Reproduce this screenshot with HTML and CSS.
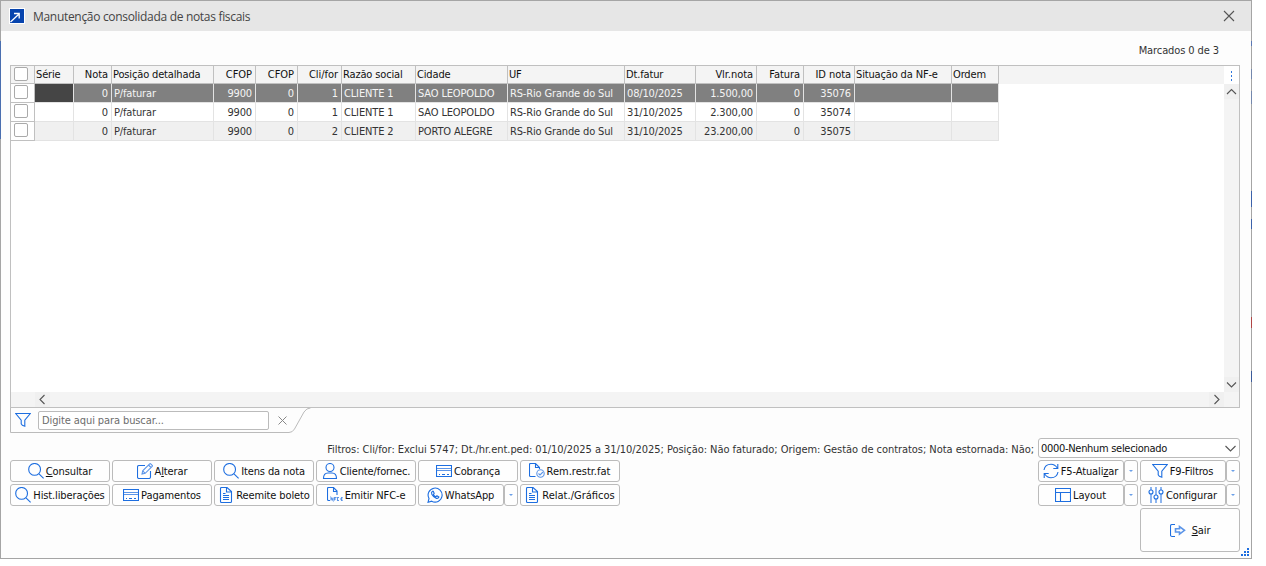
FILE: index.html
```html
<!DOCTYPE html>
<html lang="pt-BR">
<head>
<meta charset="utf-8">
<title>Manutenção consolidada de notas fiscais</title>
<link rel="stylesheet" href="styles.css">
</head>
<body>
<svg class="defs" width="0" height="0">
  <symbol id="search" viewBox="0 0 16 16"><circle cx="6.6" cy="6.4" r="5.9"/><path d="M11 10.8l4.6 4.6"/></symbol>
  <symbol id="card" viewBox="0 0 16 16"><path d="M.5 2.500h15v11H.5z"/><path class="soft" d="M1 5.500h14M1 7.500h14"/><path d="M3 11.500h1M6 11.500h3M11 11.500h2"/></symbol>
  <symbol id="doc" viewBox="0 0 16 16"><path d="M2.500 1.500q0-1 1-1h5.500l4.500 4v10q0 1-1 1h-9q-1 0-1-1zM8.500.5v4.500h5M5 6.500h2.500M5 8.500h6M5 10.500h6M5 12.500h6"/></symbol>
  <symbol id="funnel" viewBox="0 0 16 16"><path d="M.7 1.500h14.600L9.800 8.200v6l-2.400-.9-1.200-1.500V8.200z"/></symbol>
  <symbol id="edit" viewBox="0 0 16 16"><path d="M8 2.500H2q-1.500 0-1.500 1.500v10q0 1.500 1.500 1.500h10q1.500 0 1.500-1.500V8"/><path class="soft" d="M5 11l.7-3.200 7-7q.5-.5 1 0l1.500 1.500q.5.5 0 1l-7 7zM11.500 2l2.500 2.500M5.700 7.800l2.500 2.500"/></symbol>
  <symbol id="user" viewBox="0 0 16 16"><circle cx="8" cy="4.500" r="4"/><path d="M1.500 15.500Q1.500 10 6 10h4q4.500 0 4.500 5.500z"/></symbol>
  <symbol id="doccheck" viewBox="0 0 16 16"><path d="M6.500 13.500h-5q-1 0-1-1v-11q0-1 1-1h5l4 4v1.500M6.500.5v4h4"/><circle class="soft" cx="11.500" cy="10.500" r="3.700"/><path class="soft" d="M9.500 10.500l1.500 1.500 3-3"/></symbol>
  <symbol id="nfc" viewBox="0 0 16 16"><path d="M3 13.500H1.500q-1 0-1-1v-11q0-1 1-1h5l3.500 3.500v4M6.500.5v4h3.500"/><path class="soft" d="M4 13.500v-3l2 3v-3M7.500 13.500v-3h2M7.500 12h1.500M12 10.500h-1.500v3h1.500M13 12h1M15.700 13.500h-1.200v-3h1.200M14.500 12h1"/></symbol>
  <symbol id="whats" viewBox="0 0 16 16"><path d="M1 15.300l1-3.800A7 7 0 1 1 4.700 14.200z"/><path d="M5.500 4.200q-1.500 1-.7 3 1.500 3 4.700 4.200 1.800.3 2.400-1.400l-2-1.200-1 1Q7.200 9.100 6.400 7.400l.8-.9-.9-2.200z"/></symbol>
  <symbol id="refresh" viewBox="0 0 16 16"><path d="M1 7Q2 1.300 8 1.300q4 0 6.500 4M14.800 1v4.500h-4.500M15 9q-1 5.700-7 5.700-4 0-6.500-4M1.200 15v-4.500h4.500"/></symbol>
  <symbol id="layout" viewBox="0 0 16 16"><path d="M.5 1.500h15v13H.5zM.5 5.500h15M5.500 5.500v9"/></symbol>
  <symbol id="sliders" viewBox="0 0 16 16"><g class="bars"><path d="M3 0v3M3 7v9M8 0v8M8 12v4M13 0v3M13 7v9"/></g><circle cx="3" cy="5" r="2"/><circle cx="8" cy="10" r="2"/><circle cx="13" cy="5" r="2"/></symbol>
  <symbol id="exit" viewBox="0 0 16 16"><path d="M5 2.500H2q-1.500 0-1.500 1.500v9q0 1.500 1.500 1.500h3"/><path class="bold" d="M5.500 6.700h4V4.500l5 3.800-5 3.800V10h-4z"/></symbol>
</svg>
<main class="window">
  <header class="titlebar">
    <svg class="logo" width="16" height="16" viewBox="0 0 16 16"><rect width="16" height="16" fill="#fff"/><rect x="1" y="1" width="14" height="14" fill="#0744ae"/><path d="M1.500 14L9.500 6.500M5 5.500h5.200v5" fill="none" stroke="#fff" stroke-width="1.300"/></svg>
    <h1>Manutenção consolidada de notas fiscais</h1>
    <svg class="close" width="12" height="12" viewBox="0 0 12 12"><path d="M1 1l10 10M11 1L1 11"/></svg>
  </header>
  <div class="marked">Marcados 0 de 3</div>
  <section class="grid">
    <div class="view">
      <div class="row head"><b class="ck"><i></i></b><span>Série</span><span class="r">Nota</span><span>Posição detalhada</span><span class="r">CFOP</span><span class="r">CFOP</span><span class="r">Cli/for</span><span>Razão social</span><span>Cidade</span><span>UF</span><span>Dt.fatur</span><span class="r">Vlr.nota</span><span class="r">Fatura</span><span class="r">ID nota</span><span>Situação da NF-e</span><span>Ordem</span></div>
      <div class="row sel"><b class="ck"><i></i></b><span class="cur"></span><span class="r">0</span><span>P/faturar</span><span class="r">9900</span><span class="r">0</span><span class="r">1</span><span>CLIENTE 1</span><span>SAO LEOPOLDO</span><span>RS-Rio Grande do Sul</span><span>08/10/2025</span><span class="r">1.500,00</span><span class="r">0</span><span class="r">35076</span><span></span><span></span></div>
      <div class="row"><b class="ck"><i></i></b><span></span><span class="r">0</span><span>P/faturar</span><span class="r">9900</span><span class="r">0</span><span class="r">1</span><span>CLIENTE 1</span><span>SAO LEOPOLDO</span><span>RS-Rio Grande do Sul</span><span>31/10/2025</span><span class="r">2.300,00</span><span class="r">0</span><span class="r">35074</span><span></span><span></span></div>
      <div class="row alt"><b class="ck"><i></i></b><span></span><span class="r">0</span><span>P/faturar</span><span class="r">9900</span><span class="r">0</span><span class="r">2</span><span>CLIENTE 2</span><span>PORTO ALEGRE</span><span>RS-Rio Grande do Sul</span><span>31/10/2025</span><span class="r">23.200,00</span><span class="r">0</span><span class="r">35075</span><span></span><span></span></div>
    </div>
    <div class="vbar">
      <div class="menu"><svg width="15" height="17" viewBox="0 0 15 17"><path d="M7 5h1v2H7zM7 9h1v2H7zM7 13h1v2H7z"/></svg></div>
      <svg class="arrow" width="15" height="15" viewBox="0 0 15 15"><path d="M3 10l4.500-4.500L12 10"/></svg>
      <svg class="arrow" width="15" height="15" viewBox="0 0 15 15"><path d="M3 5.500L7.500 10 12 5.500"/></svg>
    </div>
    <div class="hbar">
      <svg class="arrow" width="15" height="15" viewBox="0 0 15 15"><path d="M9.500 3L5 7.500 9.500 12"/></svg>
      <svg class="arrow" width="15" height="15" viewBox="0 0 15 15"><path d="M5.500 3L10 7.500 5.500 12"/></svg>
    </div>
  </section>
  <section class="searchbar">
    <svg class="edge" width="302" height="26" viewBox="0 0 302 26"><path d="M.5 0v24.500H279q3.500 0 5.500-3.500L294 4q2.500-4 6.500-4"/></svg>
    <svg class="ic"><use href="#funnel"/></svg>
    <div class="field">Digite aqui para buscar...</div>
    <svg class="clear" width="9" height="9" viewBox="0 0 9 9"><path d="M.5.5l8 8M8.500.5l-8 8"/></svg>
  </section>
  <section class="filters">
    <span class="filtertext">Filtros: Cli/for: Exclui 5747; Dt./hr.ent.ped: 01/10/2025 a 31/10/2025; Posição: Não faturado; Origem: Gestão de contratos; Nota estornada: Não;</span>
    <div class="select"><span>0000-Nenhum selecionado</span><svg width="11" height="7" viewBox="0 0 11 7"><path d="M.5 1l5 5 5-5"/></svg></div>
  </section>
  <footer class="actions">
    <div class="left">
      <button><svg class="ic"><use href="#search"/></svg><span><u>C</u>onsultar</span></button>
      <button><svg class="ic"><use href="#edit"/></svg><span>A<u>l</u>terar</span></button>
      <button><svg class="ic"><use href="#search"/></svg><span>Itens da nota</span></button>
      <button><svg class="ic"><use href="#user"/></svg><span>Cliente/fornec.</span></button>
      <button><svg class="ic"><use href="#card"/></svg><span>Cobrança</span></button>
      <button class="wide"><svg class="ic"><use href="#doccheck"/></svg><span>Rem.restr.fat</span></button>
      <button><svg class="ic"><use href="#search"/></svg><span>Hist.liberações</span></button>
      <button><svg class="ic"><use href="#card"/></svg><span>Pagamentos</span></button>
      <button><svg class="ic"><use href="#doc"/></svg><span>Reemite boleto</span></button>
      <button><svg class="ic"><use href="#nfc"/></svg><span>Emitir NFC-e</span></button>
      <div class="split"><button><svg class="ic"><use href="#whats"/></svg><span>WhatsApp</span></button><button class="drop"></button></div>
      <button class="wide"><svg class="ic"><use href="#doc"/></svg><span>Relat./Gráficos</span></button>
    </div>
    <div class="right">
      <div class="split"><button><svg class="ic"><use href="#refresh"/></svg><span>F5-Atuali<u>z</u>ar</span></button><button class="drop"></button></div>
      <div class="split"><button><svg class="ic"><use href="#funnel"/></svg><span>F9-Filtros</span></button><button class="drop"></button></div>
      <div class="split"><button><svg class="ic"><use href="#layout"/></svg><span>Layout</span></button><button class="drop"></button></div>
      <div class="split"><button><svg class="ic"><use href="#sliders"/></svg><span>Configurar</span></button><button class="drop"></button></div>
      <button class="exit"><svg class="ic"><use href="#exit"/></svg><span><u>S</u>air</span></button>
    </div>
  </footer>
  <svg class="grip" width="8" height="8" viewBox="0 0 8 8"><path d="M0 6h2v2H0zM3 6h2v2H3zM6 6h2v2H6zM3 3h2v2H3zM6 3h2v2H6zM6 0h2v2H6z"/></svg>
</main>
</body>
</html>
```
FILE: styles.css
```css
* { box-sizing: border-box; }
body { margin: 0; background: #fff; color: #333; font: 11px/14px "DejaVu Sans Condensed", "DejaVu Sans", sans-serif; letter-spacing: -.15px; overflow: hidden; white-space: nowrap; }
svg { flex: none; fill: none; }
.defs { position: absolute; }
.window { position: relative; width: 1252px; height: 559px; border: 1px solid #a5a5a5; background: #fdfdfd; display: flex; flex-direction: column; }
/* slivers of the parent window showing along both side borders */
.window::before, .window::after { content: ""; position: absolute; width: 1px; }
.window::before { left: -1px; top: 40px; height: 98px; background: #4a6fb0; }
.window::after { right: -1px; top: 40px; height: 345px; background: linear-gradient(#5b78b4 0 5px, transparent 5px 28px, #7488ad 28px 38px, transparent 38px 50px, #7488ad 50px 63px, transparent 63px 150px, #3c62aa 150px 166px, transparent 166px 178px, #3c62aa 178px 188px, transparent 188px 276px, #b04545 276px 287px, transparent 287px 330px, #3c5c9a 330px 341px, transparent 341px); }
.titlebar { height: 30px; background: #e6e6e6; display: flex; align-items: center; padding: 0 16px 0 8px; }
.titlebar h1 { flex: 1; margin: 2px 0 0 8px; color: #444; font: 12px/16px "Open Sans", sans-serif; letter-spacing: -.31px; }
.close path, .arrow path, .select path { stroke: #555; stroke-width: 1.1; }
.marked { height: 34px; padding: 13px 32px 0 0; text-align: right; letter-spacing: -.1px; }
.grid { margin-left: 9px; width: 1230px; height: 343px; border: 1px solid #c0c0c0; background: #fff; display: grid; grid-template: 326px 15px / 1213px 15px; }
.row { height: 19px; display: grid; grid-template-columns: 24px 39px 38px 102px 42px 42px 44px 74px 92px 117px 71px 61px 47px 51px 97px 47px; }
.row span { border-right: 1px solid #e3e3e3; border-bottom: 1px solid #e3e3e3; padding: 3px 3px 0 2px; height: 19px; }
.row .r { text-align: right; }
.row.head { height: 18px; background: #f4f4f4; color: #111; }
.row.head span { height: 18px; padding: 2px 2px 0 1px; border-color: #c0c0c0; }
.row.head .r { padding-right: 3px; letter-spacing: -.05px; }
.sel span { background: #808080; color: #f4f4f4; }
.sel .cur { background: #454545; }
.alt span { background: #f0f0f0; }
.ck { border-right: 1px solid #c0c0c0; border-bottom: 1px solid #c0c0c0; padding: 1px 3px; background: #fff; }
.head .ck { background: #f4f4f4; }
.ck i { display: block; width: 14px; height: 14px; border: 1px solid #aaa; border-radius: 2px; background: #fff; }
.vbar { background: #f4f4f4; display: flex; flex-direction: column; }
.vbar .arrow:last-child { margin-top: auto; }
.menu { height: 18px; background: #fff; }
.menu path { fill: #2f76dc; }
.arrow { background: #f0f0f0; }
.hbar { grid-column: 1 / 3; background: #f4f4f4; display: flex; justify-content: space-between; padding: 0 15px 0 24px; }
.searchbar { position: relative; margin-left: 9px; height: 30px; display: flex; align-items: flex-start; padding: 3px 0 0 5px; }
.edge { position: absolute; left: 0; top: 0; }
.edge path { stroke: #bbb; }
.ic { width: 16px; height: 16px; overflow: visible; stroke: #1d6ee0; stroke-width: 1.1; }
.searchbar .ic { margin-top: 1px; }
.field { margin-left: 7px; width: 231px; height: 19px; border: 1px solid #bbb; border-radius: 2px; padding: 2px 3px; color: #6d6d6d; background: #fff; letter-spacing: -.1px; }
.clear { margin: 5px 0 0 9px; stroke: #888; }
.filters { height: 20px; display: flex; justify-content: flex-end; padding-right: 11px; }
.filtertext { padding: 5px 4px 0 0; letter-spacing: -.048px; }
.select { width: 202px; height: 20px; border: 1px solid #bbb; border-radius: 3px; background: #fff; display: flex; align-items: center; justify-content: space-between; padding: 0 3px 0 2px; color: #111; letter-spacing: -.3px; }
.select span { padding-top: 2px; }
.actions { margin-top: 2px; display: flex; justify-content: space-between; padding: 0 11px 0 9px; }
.left { display: grid; grid-template-columns: repeat(6, 100px); grid-auto-rows: 22px; gap: 2px; }
.right { display: grid; grid-template-columns: 100px 100px; grid-template-rows: 22px 22px 44px; gap: 2px; }
button { margin: 0; padding: 0; border: 1px solid #bbb; border-radius: 3px; background: #fefefe; color: #111; font: inherit; letter-spacing: -.12px; display: flex; align-items: center; justify-content: center; gap: 2px; }
button span { padding-top: 2px; }
.wide { letter-spacing: 0; padding-right: 1px; }
.split { display: grid; grid-template-columns: 86px 14px; }
.split button:first-child { padding-right: 1px; }
.drop::after { content: ""; border: 2px solid transparent; border-top: 2px solid #6b9fe8; border-bottom: 0; }
.exit { grid-column: 2; gap: 6px; }
.soft { stroke: #5c95e8; }
.bold { stroke: #5c95e8; stroke-width: 1.6; }
.bars { stroke: #8db5ef; stroke-width: 2; }
u { text-underline-offset: 1px; }
.grip { position: absolute; right: 2px; bottom: 2px; fill: #1d6ee0; }
```
